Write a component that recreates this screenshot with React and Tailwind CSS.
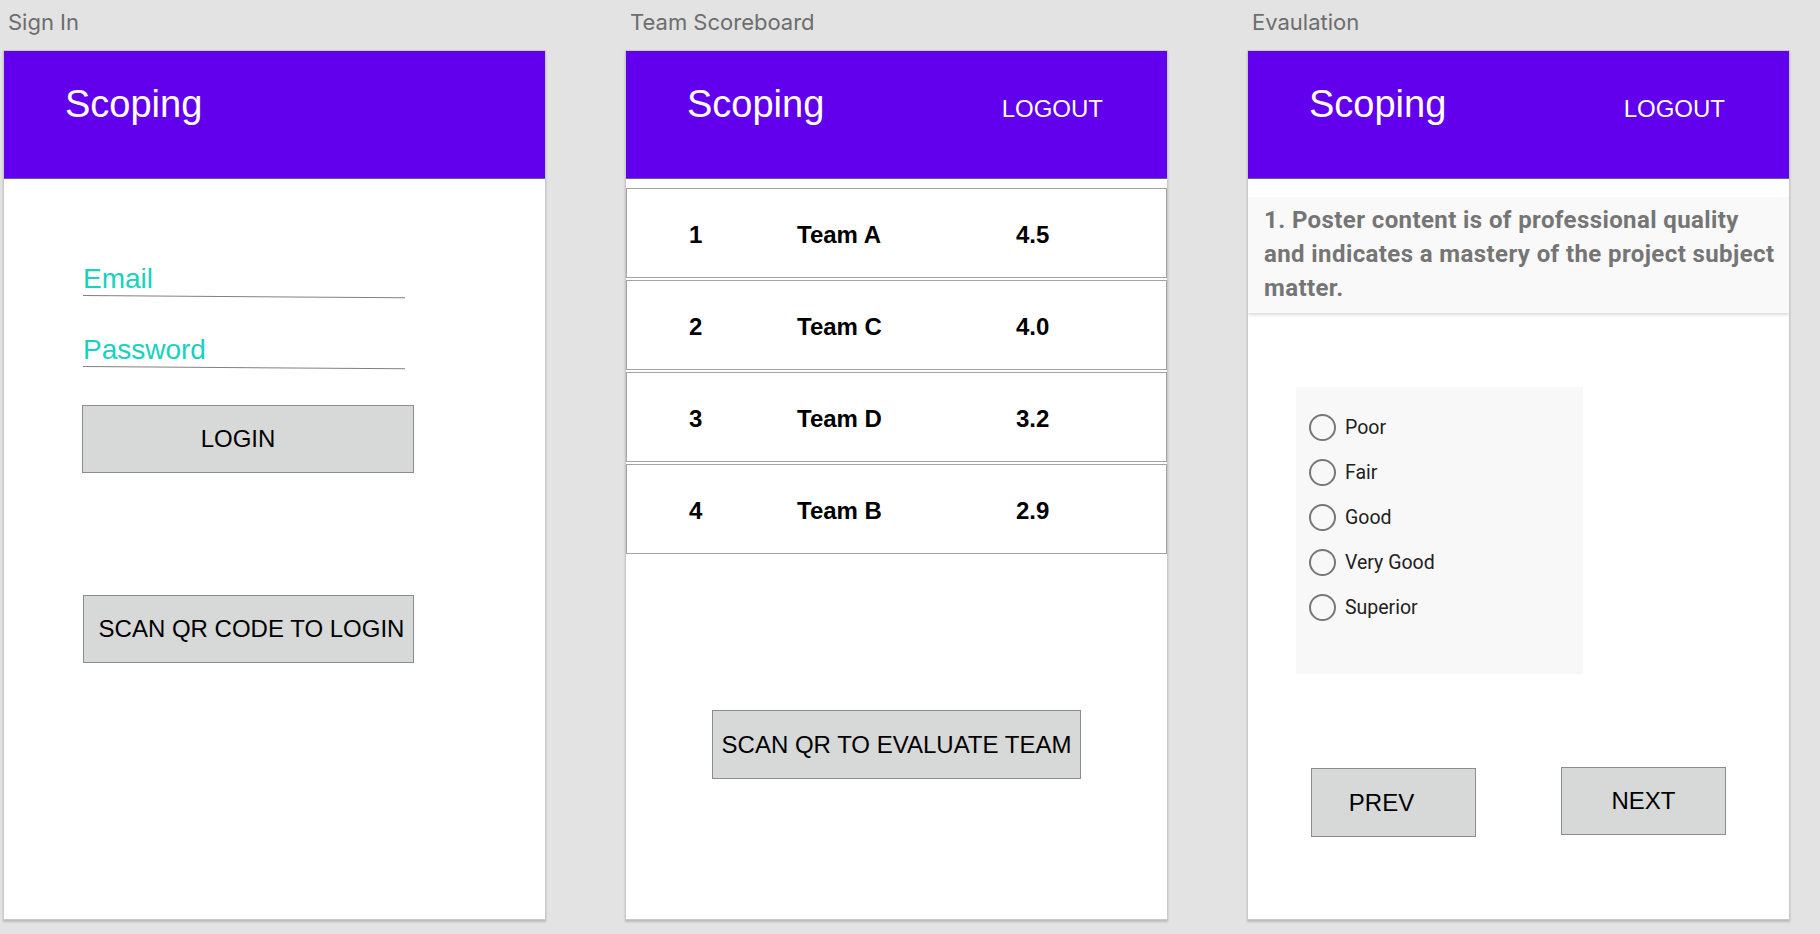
import { useState } from 'react';

const sans = { fontFamily: '"Liberation Sans", Arial, sans-serif' };

function Header({ showLogout }) {
  return (
    <div
      className="h-[128px] bg-[#6200ee] border-b border-[#6a5a8a] flex items-baseline justify-between pl-[61px] pr-[64px] pt-[34px] text-white"
      style={sans}
    >
      <span className="text-[38px] leading-none">Scoping</span>
      {showLogout && <span className="text-[24px] leading-none">LOGOUT</span>}
    </div>
  );
}

function Frame({ label, children }) {
  return (
    <div className="flex flex-col">
      <div
        className="pl-[5px] pt-[9px] h-[50px] text-[22px] leading-[26px] text-[#6d6d6d] font-['Inter',sans-serif]"
      >
        {label}
      </div>
      <div className="w-[543px] h-[870px] bg-white border border-[#c9c9c9] shadow-[0_2px_2px_rgba(0,0,0,0.18)] overflow-hidden">
        {children}
      </div>
    </div>
  );
}

function GreyButton({ children, className }) {
  return (
    <button
      className={`bg-[#d7d8d8] border border-[#8c8c8c] text-black text-[24px] leading-none flex items-center justify-center ${className}`}
      style={sans}
    >
      {children}
    </button>
  );
}

function Field({ label, className }) {
  return (
    <div className={`ml-[79px] w-[322px] ${className}`} style={sans}>
      <div className="text-[28px] leading-none text-[#16d2be] pb-[2px]">{label}</div>
      <div className="h-px bg-[#808080] rotate-[0.4deg] origin-left" />
    </div>
  );
}

function SignIn() {
  return (
    <Frame label="Sign In">
      <Header />
      <Field label="Email" className="mt-[86px]" />
      <Field label="Password" className="mt-[40px]" />
      <GreyButton className="ml-[78px] mt-[38px] w-[332px] h-[68px] pr-[20px]">LOGIN</GreyButton>
      <GreyButton className="ml-[79px] mt-[122px] w-[331px] h-[68px] pl-[6px]">SCAN QR CODE TO LOGIN</GreyButton>
    </Frame>
  );
}

const teams = [
  { rank: 1, name: 'Team A', score: '4.5' },
  { rank: 2, name: 'Team C', score: '4.0' },
  { rank: 3, name: 'Team D', score: '3.2' },
  { rank: 4, name: 'Team B', score: '2.9' },
];

function Scoreboard() {
  return (
    <Frame label="Team Scoreboard">
      <Header showLogout />
      <div className="mt-[9px] flex flex-col gap-[2px]">
        {teams.map((t) => (
          <div
            key={t.rank}
            className="h-[90px] border border-[#a3a3a3] flex items-center pl-[62px] pt-[3px] text-[24px] font-bold text-black"
            style={sans}
          >
            <span className="w-[108px]">{t.rank}</span>
            <span className="w-[219px]">{t.name}</span>
            <span>{t.score}</span>
          </div>
        ))}
      </div>
      <div className="flex justify-center mt-[156px]">
        <GreyButton className="w-[369px] h-[69px]">SCAN QR TO EVALUATE TEAM</GreyButton>
      </div>
    </Frame>
  );
}

const options = ['Poor', 'Fair', 'Good', 'Very Good', 'Superior'];

function Evaluation() {
  const [picked, setPicked] = useState(null);
  return (
    <Frame label="Evaulation">
      <Header showLogout />
      <div className="mt-[18px] h-[116px] bg-[#f9f9f9] shadow-[0_2px_3px_rgba(0,0,0,0.14)] pl-[16px] pt-[6px] text-[24px] tracking-[0.4px] leading-[34px] font-bold text-[#757575] font-['Roboto',sans-serif] whitespace-nowrap">
        1. Poster content is of professional quality
        <br />
        and indicates a mastery of the project subject
        <br />
        matter.
      </div>
      <div className="ml-[48px] mt-[74px] w-[287px] h-[287px] bg-[#f8f8f8] pt-[18px] font-['Roboto',sans-serif]">
        {options.map((o) => (
          <label key={o} className="h-[45px] flex items-center pl-[13px] cursor-pointer" onClick={() => setPicked(o)}>
            <span className="w-[27px] h-[27px] rounded-full border-2 border-[#777777] flex items-center justify-center">
              {picked === o && <span className="w-[12px] h-[12px] rounded-full bg-[#6200ee]" />}
            </span>
            <span className="ml-[9px] text-[19.5px] text-[#212121]">{o}</span>
          </label>
        ))}
      </div>
      <div className="flex ml-[63px] mt-[94px] gap-[85px]">
        <GreyButton className="w-[165px] h-[69px] pr-[24px]">PREV</GreyButton>
        <GreyButton className="w-[165px] h-[68px] -mt-px">NEXT</GreyButton>
      </div>
    </Frame>
  );
}

export default function App() {
  return (
    <div className="w-[1820px] h-[934px] bg-[#e3e3e3] flex gap-[79px] pl-[3px] overflow-hidden">
      <SignIn />
      <Scoreboard />
      <Evaluation />
    </div>
  );
}
